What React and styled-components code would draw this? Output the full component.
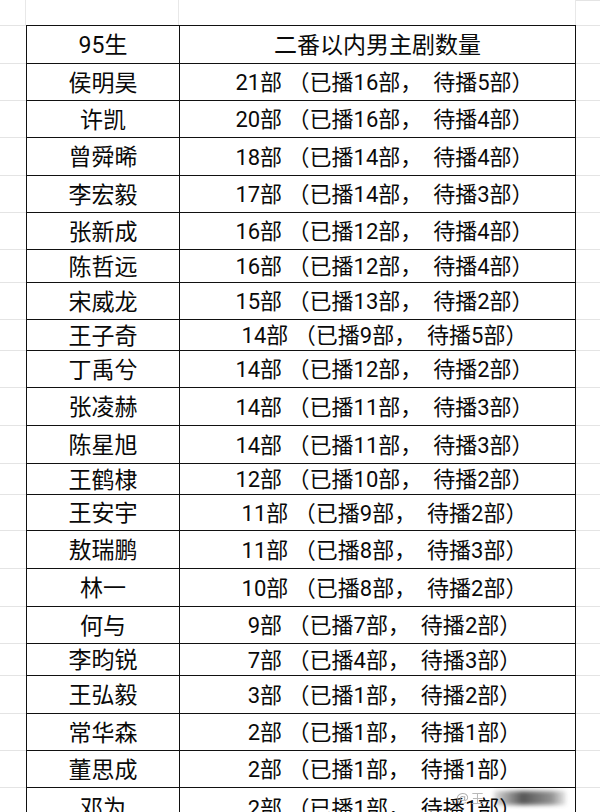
import React from 'react'
import styled, { createGlobalStyle } from 'styled-components';

const GlobalStyle = createGlobalStyle`
    html, body {
        margin: 0;
        padding: 0;
        background: #ffffff;
    }
    body {
        width: 600px;
        height: 812px;
        overflow: hidden;
        font-family: Roboto, "Noto Sans CJK SC", sans-serif;
        color: #0a0a0a;
    }
`;

const ROWS = [
    { name: '侯明昊', total: 21, aired: 16, pending: 5, h: 37 },
    { name: '许凯', total: 20, aired: 16, pending: 4, h: 37 },
    { name: '曾舜晞', total: 18, aired: 14, pending: 4, h: 38 },
    { name: '李宏毅', total: 17, aired: 14, pending: 3, h: 37 },
    { name: '张新成', total: 16, aired: 12, pending: 4, h: 37 },
    { name: '陈哲远', total: 16, aired: 12, pending: 4, h: 33 },
    { name: '宋威龙', total: 15, aired: 13, pending: 2, h: 37 },
    { name: '王子奇', total: 14, aired: 9, pending: 5, h: 31 },
    { name: '丁禹兮', total: 14, aired: 12, pending: 2, h: 37 },
    { name: '张凌赫', total: 14, aired: 11, pending: 3, h: 38 },
    { name: '陈星旭', total: 14, aired: 11, pending: 3, h: 38 },
    { name: '王鹤棣', total: 12, aired: 10, pending: 2, h: 31 },
    { name: '王安宇', total: 11, aired: 9, pending: 2, h: 36 },
    { name: '敖瑞鹏', total: 11, aired: 8, pending: 3, h: 38 },
    { name: '林一', total: 10, aired: 8, pending: 2, h: 38 },
    { name: '何与', total: 9, aired: 7, pending: 2, h: 37 },
    { name: '李昀锐', total: 7, aired: 4, pending: 3, h: 32 },
    { name: '王弘毅', total: 3, aired: 1, pending: 2, h: 38 },
    { name: '常华森', total: 2, aired: 1, pending: 1, h: 37 },
    { name: '董思成', total: 2, aired: 1, pending: 1, h: 37 },
    { name: '邓为', total: 2, aired: 1, pending: 1, h: 40 },
];

const App = () => {
    return (
        <Sheet>
            <GlobalStyle />
            <Row $h={25}>
                <Gutter $top />
                <Gutter $top />
                <Gutter $top />
                <Gutter />
            </Row>
            <Row $h={38}>
                <Gutter />
                <NameCell>95生</NameCell>
                <CountCell $size={23}>二番以内男主剧数量</CountCell>
                <Gutter />
            </Row>
            {ROWS.map(row => (
                <Row $h={row.h} key={row.name}>
                    <Gutter />
                    <NameCell>{row.name}</NameCell>
                    <CountCell $size={22} $shift={14}>
                        {row.total}部 （已播{row.aired}部，&nbsp;&nbsp;待播{row.pending}部）
                    </CountCell>
                    <Gutter />
                </Row>
            ))}
            <Watermark>
                <WeiboMark>@</WeiboMark>
                <WatermarkText>王</WatermarkText>
                <Blur />
            </Watermark>
        </Sheet>
    )
}

const Sheet = styled.div`
    position: relative;
    width: 600px;
    height: 812px;
    overflow: hidden;
    background: #ffffff;
`;

const Row = styled.div`
    display: grid;
    grid-template-columns: 26px 153px 397px 1fr;
    height: ${props => props.$h}px;
`;

const Gutter = styled.div`
    border-top: ${props => props.$top ? 'none' : '1px solid #e4e4e4'};
    border-right: ${props => props.$top ? '1px solid #e8e8e8' : 'none'};
`;

const NameCell = styled.div`
    display: flex;
    align-items: center;
    justify-content: center;
    padding-top: 2px;
    border-top: 1px solid #111111;
    border-left: 1px solid #111111;
    font-size: 23px;
    line-height: 1;
    white-space: nowrap;
`;

const CountCell = styled.div`
    display: flex;
    align-items: center;
    justify-content: center;
    padding-top: 2px;
    padding-left: ${props => props.$shift || 0}px;
    border-top: 1px solid #111111;
    border-left: 1px solid #111111;
    border-right: 1px solid #111111;
    font-size: ${props => props.$size}px;
    line-height: 1;
    white-space: pre;
`;

const Watermark = styled.div`
    position: absolute;
    right: 34px;
    bottom: 5px;
    display: flex;
    align-items: center;
    gap: 2px;
    opacity: 0.8;
`;

const WeiboMark = styled.span`
    font-family: "DejaVu Sans", sans-serif;
    font-size: 13px;
    color: #9a9a9a;
`;

const WatermarkText = styled.span`
    font-family: "Noto Sans CJK SC", sans-serif;
    font-size: 13px;
    color: #a8a8a8;
    filter: blur(0.6px);
`;

const Blur = styled.div`
    width: 72px;
    height: 14px;
    margin-left: 8px;
    background: linear-gradient(90deg, rgba(40, 40, 40, 0.2), rgba(20, 20, 20, 0.9) 40%, rgba(30, 30, 30, 0.6) 80%, rgba(120, 120, 120, 0.2));
    filter: blur(2px);
`;

export default App
